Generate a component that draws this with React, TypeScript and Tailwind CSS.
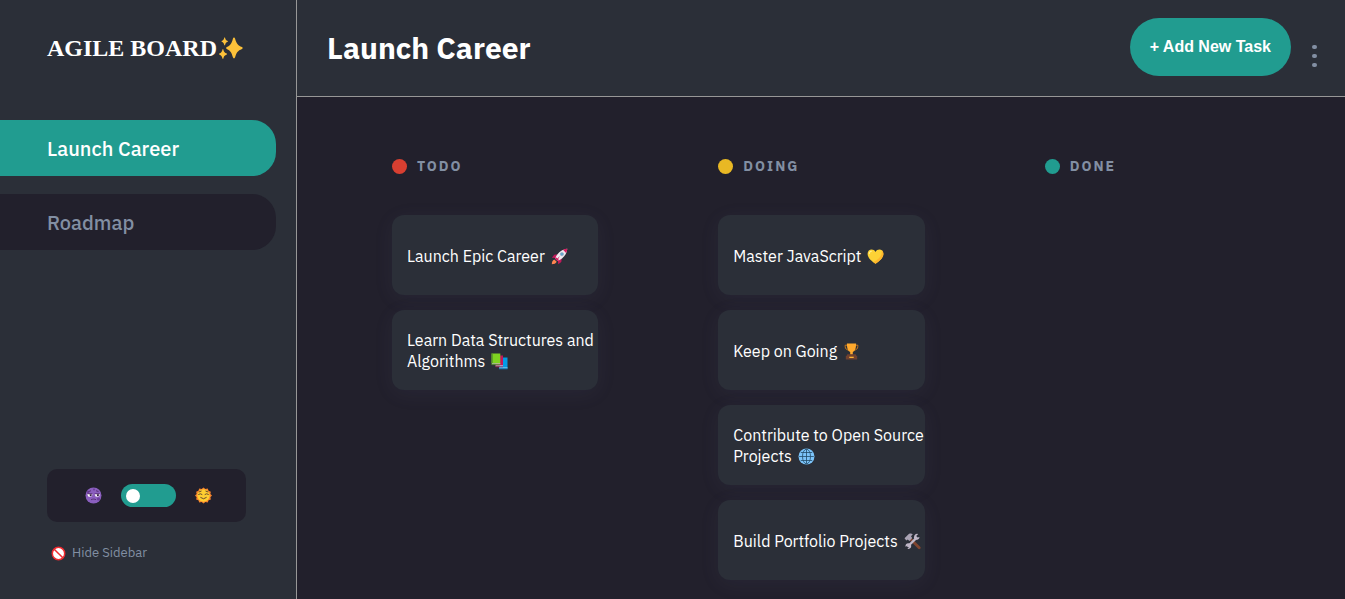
import { useState } from 'react';
import type { ReactNode } from 'react';

function Sparkles() {
  return (
    <svg viewBox="0 0 24 24" className="size-6" fill="#fcc13a" aria-hidden="true">
      <path d="M15 1.500c.5 0 .9.5 1.100 1.200 1.400 4.700 2.600 6.600 6.900 8.300.9.400.9 1.600 0 2-4.300 1.700-5.500 3.600-6.900 8.300-.4 1.500-1.800 1.500-2.200 0-1.300-4.700-2.400-6.600-6.100-8.300-.9-.4-.9-1.600 0-2 3.700-1.700 4.800-3.600 6.100-8.300.2-.7.600-1.200 1.100-1.200z" />
      <path d="M4.300 13.300c.5 2.600 1.200 3.500 3.600 4.300v.8c-2.400.8-3.100 1.700-3.600 4.300h-.8c-.5-2.600-1.200-3.500-3.300-4.300v-.8c2.100-.8 2.800-1.700 3.300-4.300z" />
      <path d="M6 1.500c.4 2 .9 2.800 2.800 3.500v.7C6.900 6.400 6.400 7.200 6 9.200h-.7c-.4-2-.9-2.800-2.700-3.500V5c1.800-.7 2.300-1.500 2.700-3.500z" />
    </svg>
  );
}

function Moon() {
  return (
    <svg viewBox="0 0 17 17" className="size-[17px]" aria-hidden="true">
      <circle cx="8.500" cy="8.500" r="8" fill="#8b5fbf" />
      <circle cx="3" cy="5" r="1.300" fill="#6d3f9c" />
      <circle cx="13.500" cy="12" r="1.600" fill="#6d3f9c" />
      <circle cx="9" cy="2.500" r="1" fill="#6d3f9c" />
      <path d="M2.300 7h5v.8a2.300 1.900 0 0 1-4.700.2zM9.700 7h5v.8a2.300 1.900 0 0 1-4.700.2z" fill="#fff" />
      <path d="M4.700 7.200h2v1a1 1 0 0 1-2 0zM11.900 7.200h2v1a1 1 0 0 1-2 0z" fill="#321b41" />
      <path d="M2.300 6.800h5M9.600 6.800h5M3.500 4.600l2.500-.9M11 3.700l2.500.9M6 12.800c1.500-1 3.500-.9 5-.1" stroke="#432058" strokeWidth=".7" fill="none" />
    </svg>
  );
}

function Sun() {
  return (
    <svg viewBox="0 0 18 18" className="size-[17px]" aria-hidden="true">
      <path d="M9 .5l2 1.600 2.500-.5.900 2.400 2.400.9-.5 2.400L18 9l-1.700 1.900.5 2.300-2.400.9-.9 2.400-2.500-.5L9 17.600 7 16l-2.500.5-.9-2.400-2.400-.9.500-2.300L0 9l1.700-1.700-.5-2.400 2.400-.9.900-2.400L7 2.100z" fill="#f8842c" />
      <circle cx="9" cy="9" r="6.600" fill="#ffce31" />
      <path d="M3.800 7.800q1.800-1.500 3.600 0M10.600 7.800q1.800-1.500 3.600 0M4.300 5.200l2.200-.8M11.500 4.400l2.200.8M6 11.200q3 2.800 6 0" stroke="#4e342e" strokeWidth=".9" fill="none" strokeLinecap="round" />
    </svg>
  );
}

function Prohibited() {
  return (
    <svg viewBox="0 0 15 15" className="size-[15px]" aria-hidden="true">
      <circle cx="7.500" cy="7.500" r="6.200" fill="#fff" stroke="#f02b30" strokeWidth="1.500" />
      <path d="M3.200 3.200l8.600 8.600" stroke="#f02b30" strokeWidth="1.500" />
    </svg>
  );
}

function Glyph({ children }: { children: ReactNode }) {
  return (
    <svg viewBox="0 0 17 17" className="ml-1.5 inline-block size-[17px] align-[-3px]" aria-hidden="true">
      {children}
    </svg>
  );
}

const rocket = (
  <Glyph>
    <path d="M6.800 6.200L3.200 6.700.9 9.700l3.700.3zM10.800 10.200l-.5 3.700-3 2.400-.4-3.800z" fill="#c2185b" />
    <path d="M3.300 11.400l2.400 2.300c-.7 1.700-2.600 2.500-4.900 2.500 0-2.200.8-4.100 2.500-4.800z" fill="#ff8550" />
    <path d="M4 10.500C6 5.500 10 1.500 16.300.7 15.600 7 11.600 11 6.600 13z" fill="#efebf0" />
    <path d="M12 1.800c1.300-.6 2.700-1 4.300-1.100-.1 1.600-.5 3-1.200 4.300z" fill="#d81b60" />
    <path d="M4 10.500l2.600 2.500 1.700-.8L4.700 8.900z" fill="#d81b60" />
    <path d="M8.900 8.100l-2.600 4.300-.9-.9z" fill="#d81b60" />
    <circle cx="10.900" cy="6.100" r="1.700" fill="#64a8d0" stroke="#8b93a8" strokeWidth=".4" />
  </Glyph>
);

const books = (
  <Glyph>
    <path d="M8.500 4.500h8v11h-8z" fill="#039be5" />
    <path d="M8 14.300h8.500v1.200H8z" fill="#81c8e8" />
    <path d="M8 15.500h8.500v.8H8z" fill="#0277bd" />
    <path d="M4.500 2.500h7.500v9.800H4.500z" fill="#c2185b" />
    <path d="M4.500 12.300H12v1.200H4.500z" fill="#d9a9c0" />
    <path d="M4.500 13.500H12v.7H4.500z" fill="#a3134c" />
    <path d="M.5.500h8.800v10H.5z" fill="#7ed321" />
    <path d="M.5.500h1.200v11H.5z" fill="#558b2f" />
    <path d="M1 10.300h8.300v1H1z" fill="#bdd5b0" />
    <path d="M.5 11.300h8.800v.8H.5z" fill="#558b2f" />
  </Glyph>
);

const heart = (
  <Glyph>
    <path d="M8.500 15.800C4.600 13 .6 10 .6 5.800c0-4.900 5.900-5.700 7.900-1.900 2-3.800 7.900-3 7.900 1.900 0 4.200-4 7.200-7.900 10z" fill="#fdd236" />
    <path d="M8.500 15.800c3.900-2.800 7.900-5.800 7.900-10 0-1.700-.7-2.900-1.700-3.600.9 5.300-2.800 9.300-8.400 11.900z" fill="#ffb52c" />
    <path d="M2.300 5.400c.1-1.300.9-2 2-2.200" stroke="#fff3a0" strokeWidth="1.100" fill="none" strokeLinecap="round" />
  </Glyph>
);

const trophy = (
  <Glyph>
    <path d="M4.200 2.200H2.200v1.500c0 2 1.400 3.200 3.700 3.500M12.800 2.200h2v1.500c0 2-1.400 3.200-3.700 3.500" stroke="#c77719" strokeWidth="1" fill="none" />
    <path d="M3.900.6h9.200c0 5-1.100 7.700-3.300 8.500v2.600H7.200V9.100C5 8.300 3.900 5.600 3.900.6z" fill="#ffa92d" />
    <path d="M4.300 11.200h8.400l.8 2.100H3.500z" fill="#70412f" />
    <path d="M2.800 12.800h11.400v3.700H2.800z" fill="#70412f" />
    <path d="M6.300 13.700h4.400v1.300H6.300z" fill="#ffb331" />
  </Glyph>
);

const globe = (
  <Glyph>
    <circle cx="8.500" cy="8.500" r="8" fill="#7cc4fa" />
    <g stroke="#234b68" strokeWidth=".8" fill="none">
      <path d="M8.500 1.200v14.600M1.200 8.500h14.600M2.800 4.500h11.400M2.800 12.500h11.400" />
      <ellipse cx="8.500" cy="8.500" rx="4" ry="7.300" />
    </g>
  </Glyph>
);

const tools = (
  <Glyph>
    <path d="M6.200 5.800l9 9" stroke="#80452f" strokeWidth="2.800" strokeLinecap="round" />
    <path d="M.5 5.200l4.300-4.200c1.500-.7 2.800-.6 4 .2L7 3.200l1.200 1.900L5.500 8 3.700 6.400 2.300 7.600z" fill="#aaa3b4" />
    <path d="M3.500 13.800l9.200-9.200" stroke="#c0b8c8" strokeWidth="2.300" />
    <path d="M15.500 3.900a3 3 0 0 1-4.500 2.500A3.200 3.200 0 0 1 14.200 1l-2 2 1.400 1.500zM1.500 13.700a2.900 2.900 0 1 1 1.900 2.100l1.800-1.700-1.200-1.500z" fill="#c0b8c8" />
  </Glyph>
);

type Task = { text: string; icon: ReactNode };
type Column = { name: string; dot: string; tasks: Task[] };

const columns: Column[] = [
  {
    name: 'TODO',
    dot: 'bg-[#d83f31]',
    tasks: [
      { text: 'Launch Epic Career', icon: rocket },
      { text: 'Learn Data Structures and Algorithms', icon: books },
    ],
  },
  {
    name: 'DOING',
    dot: 'bg-[#e9b824]',
    tasks: [
      { text: 'Master JavaScript', icon: heart },
      { text: 'Keep on Going', icon: trophy },
      { text: 'Contribute to Open Source Projects', icon: globe },
      { text: 'Build Portfolio Projects', icon: tools },
    ],
  },
  { name: 'DONE', dot: 'bg-[#219c90]', tasks: [] },
];

const boards = ['Launch Career', 'Roadmap'];

export default function App() {
  const [active, setActive] = useState('Launch Career');
  const [light, setLight] = useState(false);

  return (
    <div className="flex min-h-screen bg-[#22202c] font-['IBM_Plex_Sans','Roboto',sans-serif] text-white">
      <aside className="flex w-[297px] shrink-0 flex-col border-r border-[#979797] bg-[#2b2f38] pb-[35px]">
        <div className="flex h-24 items-center gap-0.5 pl-[47px] font-['Liberation_Serif',serif] text-2xl font-bold">
          AGILE BOARD
          <Sparkles />
        </div>
        <nav className="mt-6 flex flex-col gap-[18px] pr-5">
          {boards.map((board) => (
            <button
              key={board}
              type="button"
              onClick={() => setActive(board)}
              className={`h-14 rounded-r-3xl pt-0.5 pl-[47px] text-left text-xl font-medium ${
                board === active ? 'bg-[#219c90] text-white' : 'bg-[#22202c] text-[#828fa3]'
              }`}
            >
              {board}
            </button>
          ))}
        </nav>
        <div className="mt-auto mr-[50px] ml-[47px] flex h-[53px] items-center justify-center gap-[19px] rounded-[10px] bg-[#22202c] pl-1">
          <Moon />
          <label className="flex h-[23px] w-[55px] cursor-pointer items-center rounded-full bg-[#219c90] px-[5px]">
            <input
              type="checkbox"
              aria-label="Light theme"
              className="peer sr-only"
              checked={light}
              onChange={(e) => setLight(e.target.checked)}
            />
            <span className="size-3.5 rounded-full bg-white peer-checked:ml-auto" />
          </label>
          <Sun />
        </div>
        <button type="button" className="mt-5 ml-[51px] flex items-center gap-1.5 self-start text-[13px] leading-[22px] text-[#828fa3]">
          <Prohibited />
          Hide Sidebar
        </button>
      </aside>

      <div className="flex min-w-0 flex-1 flex-col">
        <header className="flex h-[97px] items-center justify-between border-b border-[#979797] bg-[#2b2f38] pr-[27px] pl-[30px]">
          <h1 className="text-3xl leading-10 font-bold">{active}</h1>
          <div className="flex items-center gap-[19px]">
            <button
              type="button"
              className="mb-0.5 h-[58px] rounded-full bg-[#219c90] px-5 font-['Liberation_Sans',sans-serif] text-base font-bold whitespace-nowrap"
            >
              + Add New Task
            </button>
            <button type="button" aria-label="Board options" className="mt-4 flex w-2 flex-col items-center gap-[5px]">
              <span className="h-1 w-[5px] rounded-full bg-[#828fa3]" />
              <span className="h-1 w-[5px] rounded-full bg-[#828fa3]" />
              <span className="h-1 w-[5px] rounded-full bg-[#828fa3]" />
            </button>
          </div>
        </header>

        <main className="grid grid-cols-3 gap-[120px] pt-[59px] pr-[94px] pb-[19px] pl-[95px]">
          {columns.map((column) => (
            <section key={column.name}>
              <h2 className="mb-[38px] flex items-center gap-2.5 text-sm leading-[21px] font-bold tracking-[2px] text-[#828fa3]">
                <span className={`size-[15px] rounded-full ${column.dot}`} />
                {column.name}
              </h2>
              <ul className="flex flex-col gap-[15px]">
                {column.tasks.map((task) => (
                  <li
                    key={task.text}
                    className="flex h-20 items-center rounded-xl bg-[#2b2f38] pt-0.5 pl-[15px] text-base leading-[21px] shadow-[0_4px_20px_rgba(120,120,170,0.08)]"
                  >
                    <span>
                      {task.text}
                      {task.icon}
                    </span>
                  </li>
                ))}
              </ul>
            </section>
          ))}
        </main>
      </div>
    </div>
  );
}
